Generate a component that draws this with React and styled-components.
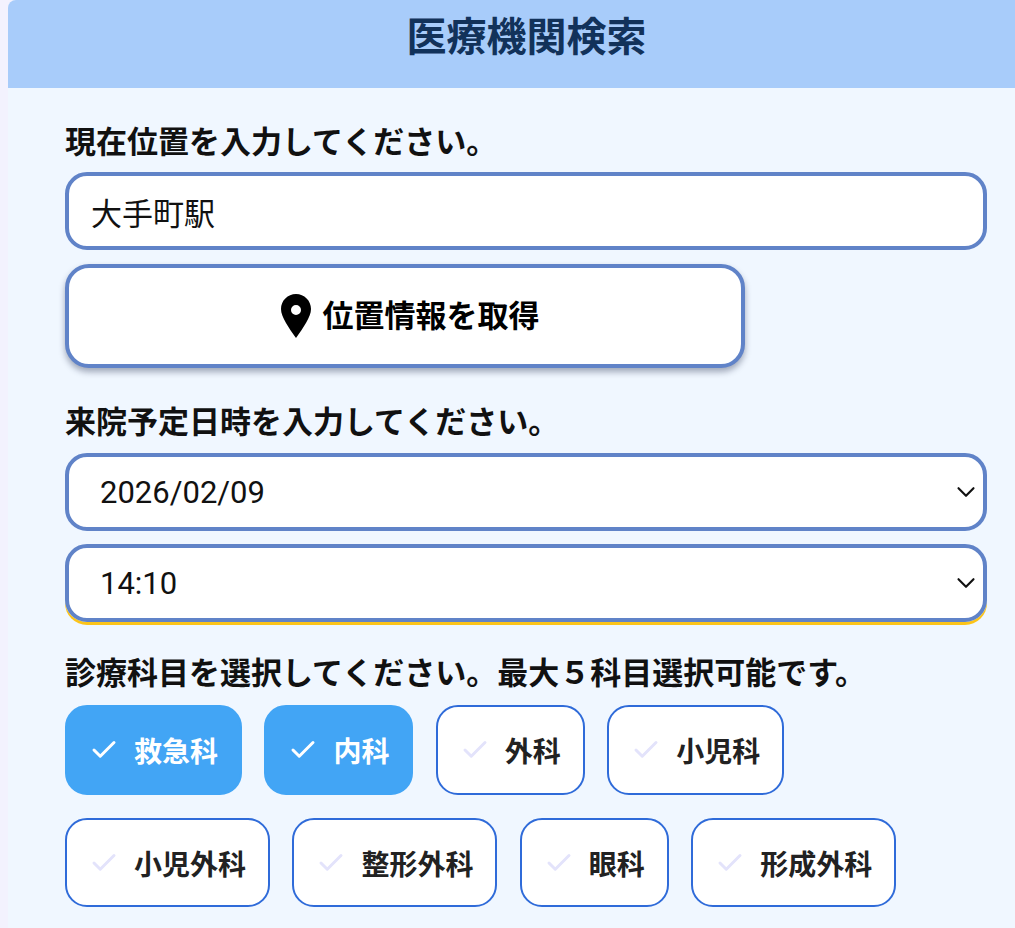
import React from 'react';
import styled, { createGlobalStyle } from 'styled-components';
import { Check, ChevronDown } from 'lucide-react';

const GlobalStyle = createGlobalStyle`
    html, body {
        margin: 0;
        height: 100%;
        overflow: hidden;
        background-color: #f3f2fe;
    }
    #root {
        height: 100%;
    }
    * {
        box-sizing: border-box;
        font-family: Roboto, "Noto Sans CJK JP", sans-serif;
    }
`;

const Page = styled.div`
    height: 100%;
    padding-left: 8px;
`;

const Panel = styled.main`
    height: 100%;
    background-color: #f0f7ff;
    border-top-left-radius: 8px;
    overflow: hidden;
`;

const Header = styled.header`
    height: 88px;
    display: flex;
    align-items: center;
    justify-content: center;
    padding: 0 0 12px 30px;
    background-color: #a8ccfa;
`;

const Title = styled.h1`
    margin: 0;
    font-size: 40px;
    line-height: 1;
    font-weight: 700;
    color: #12325a;
`;

const Form = styled.form`
    padding: 0 28px 0 57px;
`;

const Label = styled.div`
    height: 40px;
    display: flex;
    align-items: center;
    margin-top: ${props => props.$top}px;
    margin-bottom: ${props => props.$bottom}px;
    font-size: 31px;
    font-weight: 700;
    color: #111;
    white-space: nowrap;
`;

const TextInput = styled.input`
    display: block;
    width: 100%;
    height: 78px;
    padding: 0 22px;
    border: 4px solid #6083c8;
    border-radius: 22px;
    background-color: #fff;
    font-size: 31px;
    color: #111;
    outline: none;
`;

const LocationButton = styled.button`
    width: 680px;
    height: 104px;
    margin-top: 14px;
    padding: 0 0 0 10px;
    display: flex;
    align-items: center;
    justify-content: center;
    gap: 12px;
    border: 4px solid #6083c8;
    border-radius: 24px;
    background-color: #fff;
    box-shadow: 0 4px 6px rgba(40, 50, 80, 0.4);
    font-size: 31px;
    font-weight: 700;
    color: #000;
`;

const ButtonText = styled.span`
    padding-bottom: 6px;
`;

const SelectWrap = styled.div`
    position: relative;
    height: 78px;
    margin-top: ${props => props.$top}px;
    border-radius: 22px;
    box-shadow: ${props => (props.$focused ? '0 3px 0 #fcc419' : 'none')};
`;

const Select = styled.select`
    display: block;
    width: 100%;
    height: 100%;
    padding: 0 31px;
    appearance: none;
    border: 4px solid #6083c8;
    border-radius: 22px;
    background-color: #fff;
    font-size: 31px;
    color: #111;
    outline: none;
`;

const Chevron = styled(ChevronDown)`
    position: absolute;
    top: 50%;
    right: 6px;
    width: 30px;
    height: 30px;
    transform: translateY(-50%);
    color: #111;
    stroke-width: 1.7;
    pointer-events: none;
`;

const ChipRows = styled.div`
    display: flex;
    flex-wrap: wrap;
    gap: 23px 22.4px;
`;

const Chip = styled.div`
    height: ${props => props.$height}px;
    display: flex;
    align-items: center;
    gap: 15px;
    padding: 0 22px 0 22px;
    border: ${props => (props.$selected ? '2px solid #42a5f5' : '2px solid #2f6bd9')};
    border-radius: 22px;
    background-color: ${props => (props.$selected ? '#42a5f5' : '#fff')};
    font-size: 28px;
    font-weight: 700;
    color: ${props => (props.$selected ? '#fff' : '#222')};
    white-space: nowrap;
`;

const ChipCheck = styled(Check)`
    width: 30px;
    height: 30px;
    flex-shrink: 0;
    stroke-width: 2.4;
    color: ${props => (props.$selected ? '#fff' : '#e3e3fb')};
`;

const PinIcon = () => (
    <svg width="30" height="44" viewBox="0 0 30 44" aria-hidden="true">
        <path
            fillRule="evenodd"
            d="M15 0C6.700 0 0 6.700 0 15c0 8 8 19 15 29 7-10 15-21 15-29C30 6.700 23.300 0 15 0zm0 21a5 5 0 1 1 0-10 5 5 0 0 1 0 10z"
            fill="#000"
        />
    </svg>
);

const departments = [
    { name: '救急科', selected: true },
    { name: '内科', selected: true },
    { name: '外科' },
    { name: '小児科' },
    { name: '小児外科' },
    { name: '整形外科' },
    { name: '眼科' },
    { name: '形成外科' },
];

const App = () => (
    <Page>
        <GlobalStyle />
        <Panel>
            <Header>
                <Title>医療機関検索</Title>
            </Header>
            <Form>
                <Label $top={31} $bottom={13}>現在位置を入力してください。</Label>
                <TextInput type="text" defaultValue="大手町駅" />
                <LocationButton type="button">
                    <PinIcon />
                    <ButtonText>位置情報を取得</ButtonText>
                </LocationButton>
                <Label $top={31} $bottom={14}>来院予定日時を入力してください。</Label>
                <SelectWrap $top={0}>
                    <Select defaultValue="2026/02/09">
                        <option>2026/02/09</option>
                    </Select>
                    <Chevron />
                </SelectWrap>
                <SelectWrap $top={13} $focused>
                    <Select defaultValue="14:10">
                        <option>14:10</option>
                    </Select>
                    <Chevron />
                </SelectWrap>
                <Label $top={28} $bottom={15}>診療科目を選択してください。最大５科目選択可能です。</Label>
                <ChipRows>
                    {departments.map((item, index) => (
                        <Chip key={item.name} $selected={item.selected} $height={index < 4 ? 90 : 89}>
                            <ChipCheck $selected={item.selected} />
                            {item.name}
                        </Chip>
                    ))}
                </ChipRows>
            </Form>
        </Panel>
    </Page>
);

export default App;
